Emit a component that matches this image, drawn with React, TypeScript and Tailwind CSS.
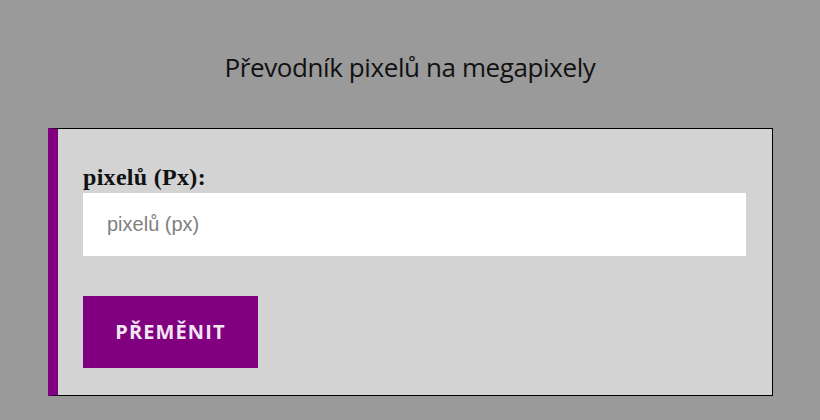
import { useState } from 'react';

export default function App() {
  const [px, setPx] = useState('');

  return (
    <div className="min-h-screen w-full bg-[#9a9a9a] pt-[47px] px-[48px]">
      <h1 className="text-center text-[26px] leading-[40px] text-[#111] tracking-[-0.4px] font-['Open_Sans',sans-serif]">
        Převodník pixelů na megapixely
      </h1>

      <div className="mt-[41px] w-[725px] bg-[#d3d3d3] border border-black border-l-[10px] border-l-[#800080] pl-[25px] pr-[26px] pt-[32px] pb-[27px]">
        <label className="block text-[24px] leading-[32px] font-bold text-[#111] tracking-[0.3px] font-['Liberation_Serif',serif]">
          pixelů (Px):
        </label>
        <input
          value={px}
          onChange={(e) => setPx(e.target.value)}
          placeholder="pixelů (px)"
          className="block w-full h-[63px] bg-white px-[24px] text-[20px] text-[#333] placeholder:text-[#808080] outline-none font-['Liberation_Sans',sans-serif]"
        />
        <button className="mt-[40px] w-[175px] h-[72px] bg-[#800080] text-[#f3e6f3] text-[20px] font-bold tracking-[1.1px] font-['Open_Sans',sans-serif]">
          PŘEMĚNIT
        </button>
      </div>
    </div>
  );
}
